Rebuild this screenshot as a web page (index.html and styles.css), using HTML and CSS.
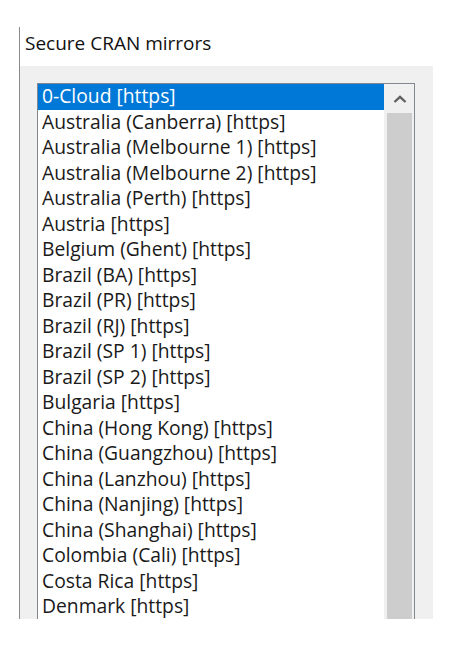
FILE: index.html
```html
<!DOCTYPE html>
<html lang="en">
<head>
    <meta charset="UTF-8">
    <title>Secure CRAN mirrors</title>
    <link rel="stylesheet" href="styles.css">
</head>
<body>
    <div class="dialog">
        <div class="dialog-title">Secure CRAN mirrors</div>
        <div class="dialog-body">
            <div class="listbox">
                <ul class="items">
                    <li class="item selected">0-Cloud [https]</li>
                    <li class="item">Australia (Canberra) [https]</li>
                    <li class="item">Australia (Melbourne 1) [https]</li>
                    <li class="item">Australia (Melbourne 2) [https]</li>
                    <li class="item">Australia (Perth) [https]</li>
                    <li class="item">Austria [https]</li>
                    <li class="item">Belgium (Ghent) [https]</li>
                    <li class="item">Brazil (BA) [https]</li>
                    <li class="item">Brazil (PR) [https]</li>
                    <li class="item">Brazil (RJ) [https]</li>
                    <li class="item">Brazil (SP 1) [https]</li>
                    <li class="item">Brazil (SP 2) [https]</li>
                    <li class="item">Bulgaria [https]</li>
                    <li class="item">China (Hong Kong) [https]</li>
                    <li class="item">China (Guangzhou) [https]</li>
                    <li class="item">China (Lanzhou) [https]</li>
                    <li class="item">China (Nanjing) [https]</li>
                    <li class="item">China (Shanghai) [https]</li>
                    <li class="item">Colombia (Cali) [https]</li>
                    <li class="item">Costa Rica [https]</li>
                    <li class="item">Denmark [https]</li>
                </ul>
                <div class="scrollbar">
                    <div class="scroll-btn">
                        <svg width="14" height="8" viewBox="0 0 14 8">
                            <polyline points="1.5,7 7,1.8 12.5,7" fill="none" stroke="#606060" stroke-width="2.4"/>
                        </svg>
                    </div>
                    <div class="scroll-thumb"></div>
                </div>
            </div>
        </div>
    </div>
</body>
</html>
```

FILE: styles.css
```css
body {
    margin: 0;
    background: #ffffff;
    font-family: "Open Sans", "Noto Sans", sans-serif;
    color: #000000;
}

.dialog {
    margin: 27px 0 0 19px;
    width: 413px;
    height: 592px;
    border-left: 1px solid #8a8a8a;
    overflow: hidden;
    display: flex;
    flex-direction: column;
}

.dialog-title {
    flex-shrink: 0;
    height: 39px;
    box-sizing: border-box;
    padding: 6px 0 0 5px;
    font-size: 19px;
    line-height: 20px;
    color: #111111;
}

.dialog-body {
    flex: 1;
    min-height: 0;
    overflow: hidden;
    background: #f0f0f0;
    padding: 17px 18px 0 17px;
}

.listbox {
    display: flex;
    height: 560px;
    border: 1px solid #828790;
    background: #ffffff;
}

.items {
    list-style: none;
    margin: 0;
    padding: 0;
    width: 346px;
}

.item {
    height: 25.5px;
    padding-left: 4px;
    font-size: 19.3px;
    line-height: 24.5px;
    white-space: nowrap;
    color: #1a1a1a;
}

.item.selected {
    background: #0078d7;
    color: #ffffff;
}

/* vertical scrollbar, classic windows look */
.scrollbar {
    flex: 1;
    display: flex;
    flex-direction: column;
    background: #f0f0f0;
}

.scroll-btn {
    height: 29px;
    display: flex;
    align-items: center;
    justify-content: center;
    padding-left: 2px;
}

.scroll-thumb {
    flex: 1;
    margin: 0 2px 0 3px;
    background: #cdcdcd;
}
```
